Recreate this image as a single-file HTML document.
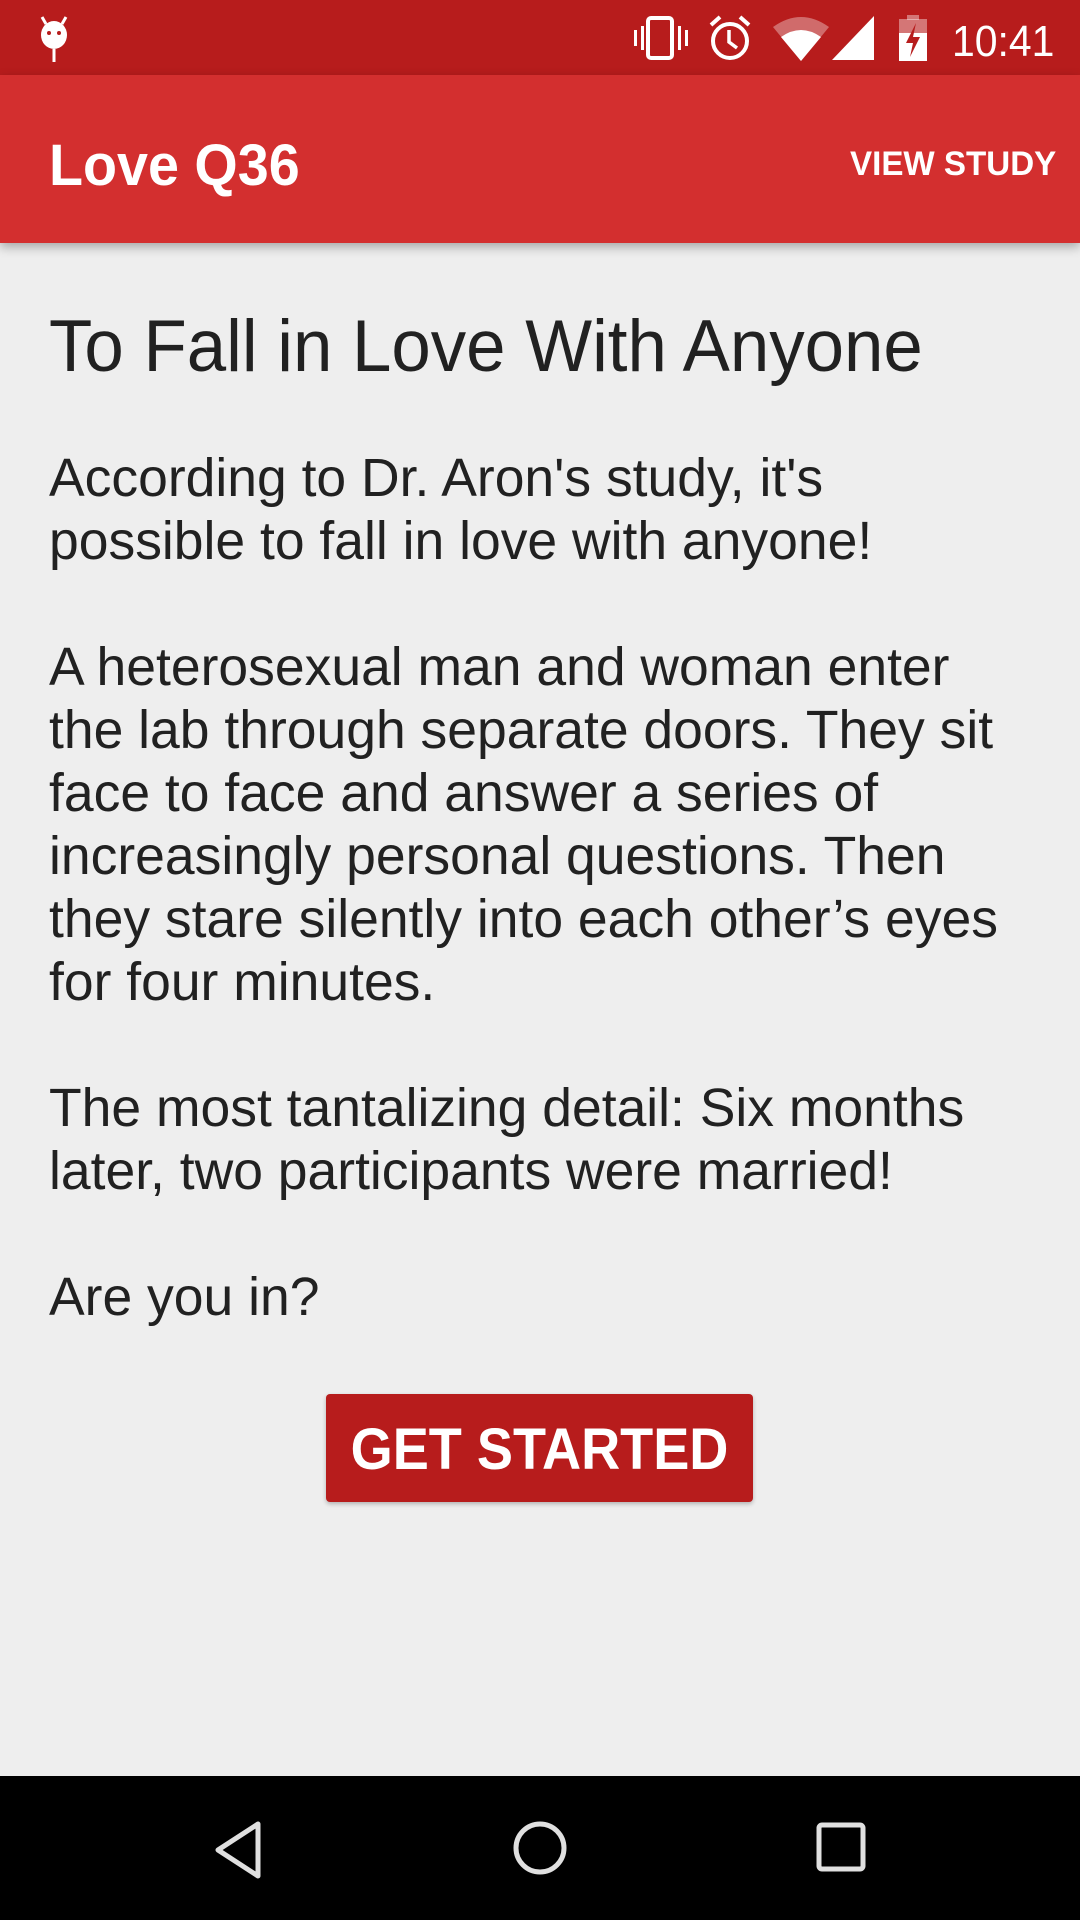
<!DOCTYPE html>
<html><head><meta charset="utf-8"><style>
*{margin:0;padding:0;box-sizing:border-box}
body{width:1080px;height:1920px;background:#eeeeee;font-family:"Liberation Sans",sans-serif;position:relative;overflow:hidden;color:#212121}
.sb{position:absolute;left:0;top:0;width:1080px;height:75px;background:#b71c1c}
.ab{position:absolute;left:0;top:75px;width:1080px;height:168px;background:#d32f2f;box-shadow:0 4px 10px rgba(0,0,0,.3)}
.t{position:absolute;white-space:nowrap;line-height:1}
.ln{position:absolute;left:49px;white-space:nowrap;font-size:54px;transform-origin:0 0;transform:scaleX(.99)}
.btn{position:absolute;left:326px;top:1394px;width:427px;height:108px;background:#b71c1c;border-radius:4px;box-shadow:0 2px 4px rgba(0,0,0,.25)}
.nav{position:absolute;left:0;top:1776px;width:1080px;height:144px;background:#000}
</style></head><body>
<div class="sb">
<svg style="position:absolute;left:36px;top:15px" width="36" height="48" viewBox="0 0 36 48"><path d="M6 2 L10 9 M30 2 L26 9" stroke="#fff" stroke-width="3"/><ellipse cx="18" cy="20" rx="13" ry="14" fill="#fff"/><circle cx="13" cy="18" r="2" fill="#b71c1c"/><circle cx="23" cy="18" r="2" fill="#b71c1c"/><rect x="16.5" y="34" width="3" height="13" fill="#fff"/></svg>
<svg style="position:absolute;left:634px;top:16px" width="54" height="44" viewBox="0 0 54 44"><rect x="14" y="2" width="24" height="40" rx="3" fill="none" stroke="#fff" stroke-width="4"/><rect x="0" y="14" width="3" height="16" fill="#fff"/><rect x="7" y="10" width="3" height="24" fill="#fff"/><rect x="44" y="10" width="3" height="24" fill="#fff"/><rect x="51" y="14" width="3" height="16" fill="#fff"/></svg>
<svg style="position:absolute;left:708px;top:15px" width="44" height="46" viewBox="0 0 44 46"><circle cx="22" cy="26" r="17" fill="none" stroke="#fff" stroke-width="4"/><path d="M21 15 V27 L29 33" fill="none" stroke="#fff" stroke-width="3.5"/><path d="M3 10 L12 2 M41 10 L32 2" stroke="#fff" stroke-width="4"/></svg>
<svg style="position:absolute;left:773px;top:15px" width="56" height="46" viewBox="0 0 56 46"><path d="M0 12 Q28 -8 56 12 L28 46 Z" fill="#fff" opacity=".35"/><path d="M8 22 Q28 8 48 22 L28 46 Z" fill="#fff"/></svg>
<svg style="position:absolute;left:832px;top:16px" width="42" height="44" viewBox="0 0 42 44"><path d="M42 0 V44 H0 Z" fill="#fff"/></svg>
<svg style="position:absolute;left:899px;top:15px" width="28" height="46" viewBox="0 0 28 46"><rect x="8" y="0" width="12" height="5" fill="#fff" opacity=".4"/><rect x="0" y="4" width="28" height="42" fill="#fff" opacity=".4"/><rect x="0" y="18" width="28" height="28" fill="#fff"/><path d="M17 8 L7 28 H14 L11 42 L21 22 H14 Z" fill="#b71c1c"/></svg>
<div class="t" style="left:952px;top:20px;font-size:44px;color:#fff;transform-origin:0 0;transform:scaleX(.93)">10:41</div>
</div>
<div class="ab">
<div class="t" style="left:49px;top:62px;font-size:58px;font-weight:bold;color:#fff;transform-origin:0 0;transform:scaleX(.96)">Love Q36</div>
<div class="t" style="left:850px;top:72px;font-size:34px;font-weight:bold;color:#fff;transform-origin:0 0;transform:scaleX(.975)">VIEW STUDY</div>
</div>
<div class="ln" style="top:305px;font-size:73px;transform:scaleX(.97)">To Fall in Love With Anyone</div>
<div class="ln" style="top:447px">According to Dr. Aron's study, it's</div>
<div class="ln" style="top:510px">possible to fall in love with anyone!</div>
<div class="ln" style="top:636px">A heterosexual man and woman enter</div>
<div class="ln" style="top:699px">the lab through separate doors. They sit</div>
<div class="ln" style="top:762px">face to face and answer a series of</div>
<div class="ln" style="top:825px">increasingly personal questions. Then</div>
<div class="ln" style="top:888px">they stare silently into each other’s eyes</div>
<div class="ln" style="top:951px">for four minutes.</div>
<div class="ln" style="top:1077px">The most tantalizing detail: Six months</div>
<div class="ln" style="top:1140px">later, two participants were married!</div>
<div class="ln" style="top:1266px">Are you in?</div>
<div class="btn"><div class="t" style="left:0;width:427px;text-align:center;top:27px;font-size:58px;font-weight:bold;color:#fff;transform:scaleX(.933)">GET STARTED</div></div>
<div class="nav">
<svg style="position:absolute;left:212px;top:44px" width="54" height="60" viewBox="0 0 54 60"><path d="M46 4 V56 L6 30 Z" fill="none" stroke="#e0e0e0" stroke-width="5" stroke-linejoin="round"/></svg>
<svg style="position:absolute;left:512px;top:44px" width="56" height="56" viewBox="0 0 56 56"><circle cx="28" cy="28" r="24" fill="none" stroke="#e0e0e0" stroke-width="5"/></svg>
<svg style="position:absolute;left:816px;top:46px" width="50" height="50" viewBox="0 0 50 50"><rect x="3" y="3" width="44" height="44" rx="3" fill="none" stroke="#e0e0e0" stroke-width="5"/></svg>
</div>
</body></html>
